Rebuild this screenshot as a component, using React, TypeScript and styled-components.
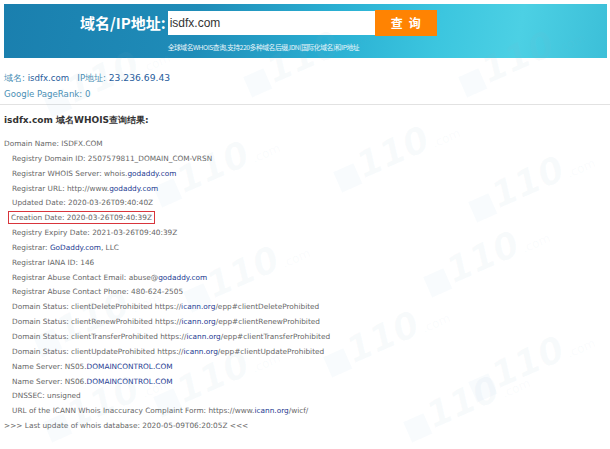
import * as React from 'react'
import styled, { createGlobalStyle } from 'styled-components'

const GlobalStyle = createGlobalStyle`
  html, body {
    margin: 0;
    padding: 0;
    background: #fff;
  }
  body {
    font-family: "DejaVu Sans", Verdana, sans-serif;
    width: 610px;
    height: 449px;
    overflow: hidden;
  }
`

const Page = styled.div`
  position: relative;
  width: 610px;
  height: 449px;
  overflow: hidden;
  padding-top: 4px;
  box-sizing: border-box;
`

const Watermarks = styled.div`
  position: absolute;
  inset: 0;
  pointer-events: none;
  z-index: 2;
`

const Mark = styled.div`
  position: absolute;
  display: flex;
  align-items: flex-end;
  transform: rotate(-24deg);
  color: rgba(140, 175, 205, 0.06);
  font-family: "DejaVu Sans", sans-serif;
  font-weight: bold;
  font-style: italic;
  white-space: nowrap;
  .box {
    width: 22px;
    height: 22px;
    background: rgba(120, 170, 210, 0.05);
    margin-right: 3px;
  }
  .num {
    font-size: 36px;
    line-height: 32px;
  }
  .dot {
    font-size: 12px;
    font-style: normal;
    font-weight: normal;
    margin-left: 2px;
  }
`

const Banner = styled.div`
  margin: 0 3px 0 4px;
  height: 54px;
  background: linear-gradient(100deg, #1a7fae 0%, #1f8cb8 32%, #2ab0d3 55%, #3cc6df 72%, #4cd0e4 85%, #3cbfd8 100%);
  display: flex;
  padding: 6px 0 0 76px;
  box-sizing: border-box;
`

const Label = styled.div`
  color: #fff;
  font-family: "Noto Sans CJK SC", sans-serif;
  font-weight: bold;
  font-size: 15px;
  line-height: 26px;
  margin-right: 2px;
`

const SearchBlock = styled.div`
  display: flex;
  flex-direction: column;
`

const SearchRow = styled.div`
  display: flex;
  align-items: center;
  height: 26px;
`

const Input = styled.div`
  width: 207px;
  height: 24px;
  background: #fff;
  box-sizing: border-box;
  padding-left: 2px;
  font-family: "Liberation Sans", Arial, sans-serif;
  font-size: 12px;
  line-height: 24px;
  color: #333;
`

const SearchButton = styled.div`
  width: 62px;
  height: 26px;
  background: #ff8302;
  color: #fff;
  font-family: "Noto Sans CJK SC", sans-serif;
  font-weight: bold;
  font-size: 12px;
  line-height: 26px;
  text-align: center;
  letter-spacing: 6px;
  text-indent: 6px;
`

const Hint = styled.div`
  margin-top: 6px;
  color: #eaf6fb;
  font-family: "Noto Sans CJK SC", sans-serif;
  font-size: 6.8px;
  line-height: 10px;
  white-space: nowrap;
  letter-spacing: -0.45px;
`

const Info = styled.div`
  padding: 12px 4px 0;
  font-size: 8.6px;
  line-height: 16px;
  color: #4a8fb5;
`

const InfoValue = styled.span<{ $strong?: boolean }>`
  color: #1f5c9c;
  font-size: ${p => (p.$strong ? '9.2px' : 'inherit')};
`

const Divider = styled.div`
  margin-top: 2px;
  height: 1px;
  background: #e2e2e2;
`

const Heading = styled.div`
  padding: 8px 4px 0;
  font-size: 9px;
  font-weight: bold;
  line-height: 14px;
  color: #333;
`

const Lines = styled.div`
  padding: 10px 0 0 4px;
  font-size: 7.35px;
  line-height: 14.85px;
  color: #666;
`

const Line = styled.div<{ $indent?: boolean }>`
  padding-left: ${p => (p.$indent ? '8px' : '0')};
  white-space: nowrap;
`

const Marked = styled.span`
  display: inline-block;
  border: 1px solid #d8353c;
  line-height: 11px;
  padding: 0 2px 0 2px;
  margin-left: -4px;
`

const A = styled.span`
  color: #1d3a91;
`

const marks = [
  { x: 40, y: 60 },
  { x: 240, y: 40 },
  { x: 455, y: 40 },
  { x: 150, y: 150 },
  { x: 330, y: 135 },
  { x: 465, y: 165 },
  { x: 180, y: 255 },
  { x: 420, y: 240 },
  { x: 30, y: 300 },
  { x: 320, y: 320 },
  { x: 465, y: 345 },
  { x: 150, y: 360 },
  { x: 40, y: 385 },
  { x: 400, y: 385 },
]

const App: React.FC = () => (
  <Page>
    <GlobalStyle />
    <Banner>
      <Label>域名/IP地址:</Label>
      <SearchBlock>
        <SearchRow>
          <Input>isdfx.com</Input>
          <SearchButton>查询</SearchButton>
        </SearchRow>
        <Hint>全球域名WHOIS查询,支持220多种域名后缀,IDN(国际化域名)和IP地址</Hint>
      </SearchBlock>
    </Banner>

    <Info>
      <div>
        域名: <InfoValue>isdfx.com</InfoValue>&nbsp;&nbsp; IP地址: <InfoValue $strong>23.236.69.43</InfoValue>
      </div>
      <div>Google PageRank: 0</div>
    </Info>
    <Divider />
    <Heading>isdfx.com 域名WHOIS查询结果:</Heading>

    <Lines>
      <Line>Domain Name: ISDFX.COM</Line>
      <Line $indent>Registry Domain ID: 2507579811_DOMAIN_COM-VRSN</Line>
      <Line $indent>Registrar WHOIS Server: whois.<A>godaddy.com</A></Line>
      <Line $indent>Registrar URL: http://www.<A>godaddy.com</A></Line>
      <Line $indent>Updated Date: 2020-03-26T09:40:40Z</Line>
      <Line $indent>
        <Marked>Creation Date: 2020-03-26T09:40:39Z</Marked>
      </Line>
      <Line $indent>Registry Expiry Date: 2021-03-26T09:40:39Z</Line>
      <Line $indent>Registrar: <A>GoDaddy.com</A>, LLC</Line>
      <Line $indent>Registrar IANA ID: 146</Line>
      <Line $indent>Registrar Abuse Contact Email: abuse@<A>godaddy.com</A></Line>
      <Line $indent>Registrar Abuse Contact Phone: 480-624-2505</Line>
      <Line $indent>Domain Status: clientDeleteProhibited https://<A>icann.org</A>/epp#clientDeleteProhibited</Line>
      <Line $indent>Domain Status: clientRenewProhibited https://<A>icann.org</A>/epp#clientRenewProhibited</Line>
      <Line $indent>Domain Status: clientTransferProhibited https://<A>icann.org</A>/epp#clientTransferProhibited</Line>
      <Line $indent>Domain Status: clientUpdateProhibited https://<A>icann.org</A>/epp#clientUpdateProhibited</Line>
      <Line $indent>Name Server: NS05.<A>DOMAINCONTROL.COM</A></Line>
      <Line $indent>Name Server: NS06.<A>DOMAINCONTROL.COM</A></Line>
      <Line $indent>DNSSEC: unsigned</Line>
      <Line $indent>URL of the ICANN Whois Inaccuracy Complaint Form: https://www.<A>icann.org</A>/wicf/</Line>
      <Line>&gt;&gt;&gt; Last update of whois database: 2020-05-09T06:20:05Z &lt;&lt;&lt;</Line>
    </Lines>

    <Watermarks>
      {marks.map((m, i) => (
        <Mark key={i} style={{ left: m.x, top: m.y }}>
          <span className="box" />
          <span className="num">110</span>
          <span className="dot">.com</span>
        </Mark>
      ))}
    </Watermarks>
  </Page>
)

export default App
